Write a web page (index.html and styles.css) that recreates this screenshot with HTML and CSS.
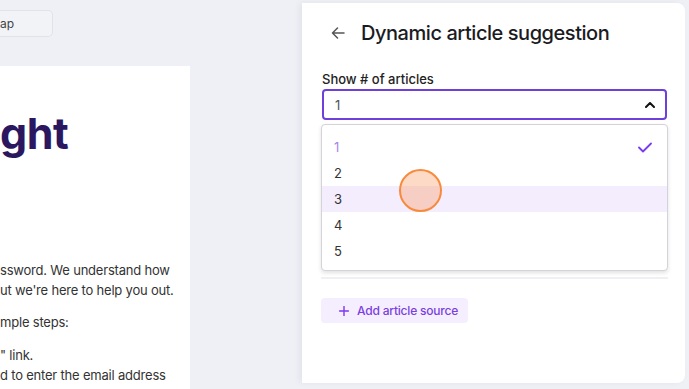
FILE: index.html
```html
<!DOCTYPE html>
<html lang="en">
<head>
<meta charset="utf-8">
<title>Dynamic article suggestion</title>
<link rel="stylesheet" href="styles.css">
</head>
<body>
<div class="left">
  <div class="topbar">
    <div class="ghost-btn">ap</div>
  </div>
  <div class="card">
    <div class="heading">ght</div>
    <p class="para p1"><span>ssword. We understand how</span><span>ut we're here to help you out.</span></p>
    <p class="para p2"><span>mple steps:</span></p>
    <p class="para p3"><span>" link.</span><span>d to enter the email address</span></p>
  </div>
</div>
<div class="panel">
  <div class="header">
    <svg class="back" width="14" height="12" viewBox="0 0 14 12"><path d="M13 6H1.5M6.5 1L1.5 6l5 5" fill="none" stroke="#555" stroke-width="1.5" stroke-linecap="round" stroke-linejoin="round"/></svg>
    <h1 class="title">Dynamic article suggestion</h1>
  </div>
  <div class="field">
    <div class="label">Show # of articles</div>
    <div class="select-wrap">
      <div class="select">
        <span class="value">1</span>
        <svg class="chev" width="10" height="6" viewBox="0 0 10 6"><path d="M1 5l4-4 4 4" fill="none" stroke="#111" stroke-width="2" stroke-linecap="round" stroke-linejoin="round"/></svg>
      </div>
      <ul class="menu">
        <li class="opt selected">1<svg class="check" width="14" height="11" viewBox="0 0 14 11"><path d="M1 5.5l4 4L13 1.5" fill="none" stroke="#7c3aed" stroke-width="1.8" stroke-linecap="round" stroke-linejoin="round"/></svg></li>
        <li class="opt">2</li>
        <li class="opt hover">3</li>
        <li class="opt">4</li>
        <li class="opt">5</li>
      </ul>
      <div class="cursor"></div>
    </div>
  </div>
  <div class="divider"></div>
  <div class="add-btn">
    <svg width="10" height="10" viewBox="0 0 10 10"><path d="M5 0.5v9M0.5 5h9" stroke="#7c3aed" stroke-width="1.4" stroke-linecap="round"/></svg>
    <span>Add article source</span>
  </div>
</div>
</body>
</html>
```
FILE: styles.css
```css
* { box-sizing: border-box; }
html, body { margin: 0; padding: 0; }
body {
  width: 689px;
  height: 389px;
  overflow: hidden;
  background: #eff0f5;
  display: flex;
  font-family: Inter, "Open Sans", sans-serif;
}
.left {
  width: 302px;
  flex: none;
  display: flex;
  flex-direction: column;
}
.topbar {
  height: 66px;
  padding-top: 10px;
}
.ghost-btn {
  width: 53px;
  height: 27px;
  border: 1px solid #e1e2e9;
  border-left: none;
  border-radius: 0 5px 5px 0;
  background: #f2f3f7;
  font-size: 12px;
  color: #444;
  line-height: 25px;
  padding-left: 0;
}
.card {
  width: 190px;
  flex: 1;
  background: #fff;
  padding-top: 43px;
  overflow: hidden;
}
.heading {
  font-size: 43px;
  font-weight: 700;
  color: #2a1760;
  line-height: 48px;
  letter-spacing: -0.5px;
}
.para {
  margin: 0;
  font-size: 13px;
  line-height: 20px;
  color: #333;
  letter-spacing: -0.2px;
}
.p1 { margin-top: 103px; }
.p2 { margin-top: 12px; }
.p3 { margin-top: 13px; }
.para span { display: block; white-space: nowrap; }
.panel {
  flex: 1;
  margin: 3px 4px 6px 0;
  background: #fff;
  border-radius: 0 8px 8px 0;
  box-shadow: -3px 0 6px rgba(20, 20, 60, 0.05);
  padding: 17px 18px 0 20px;
}
.header {
  display: flex;
  align-items: center;
  height: 26px;
  padding-left: 9px;
  gap: 16px;
}
.back { flex: none; }
.title {
  margin: 0;
  font-size: 20px;
  font-weight: 500;
  color: #1b1b1f;
  letter-spacing: -0.45px;
}
.field { margin-top: 25px; }
.label {
  font-size: 13px;
  font-weight: 500;
  color: #222;
  line-height: 16px;
  margin-bottom: 2px;
}
.select-wrap { position: relative; }
.select {
  height: 31px;
  border: 2px solid #6f3fd9;
  border-radius: 4px;
  display: flex;
  align-items: center;
  justify-content: space-between;
  padding: 0 10px 0 11px;
  font-size: 13px;
  color: #555;
}
.menu {
  position: absolute;
  top: 35px;
  left: -1px;
  right: -1px;
  margin: 0;
  padding: 9px 0 6px;
  list-style: none;
  background: #fff;
  border: 1px solid #d3d3d9;
  border-radius: 4px;
  box-shadow: 0 2px 4px rgba(0, 0, 0, 0.12);
  z-index: 2;
}
.opt {
  height: 26px;
  display: flex;
  align-items: center;
  justify-content: space-between;
  padding: 0 15px 0 12px;
  font-size: 13px;
  color: #333;
}
.opt.selected { color: #a783f0; }
.opt.hover { background: #f4edfd; }
.cursor {
  position: absolute;
  left: 77px;
  top: 80px;
  width: 43px;
  height: 43px;
  border-radius: 50%;
  border: 2px solid #f98a3c;
  background: rgba(250, 150, 90, 0.35);
  z-index: 3;
}
.divider {
  margin-top: 157px;
  height: 2px;
  background: #efeff4;
  margin-left: -1px;
  margin-right: -1px;
}
.add-btn {
  margin-top: 19px;
  margin-left: -1px;
  width: 147px;
  height: 25px;
  background: #f5eefe;
  border-radius: 4px;
  display: flex;
  align-items: center;
  gap: 8px;
  padding-left: 18px;
  font-size: 12px;
  font-weight: 500;
  color: #7a3fe0;
  letter-spacing: -0.2px;
}
```
